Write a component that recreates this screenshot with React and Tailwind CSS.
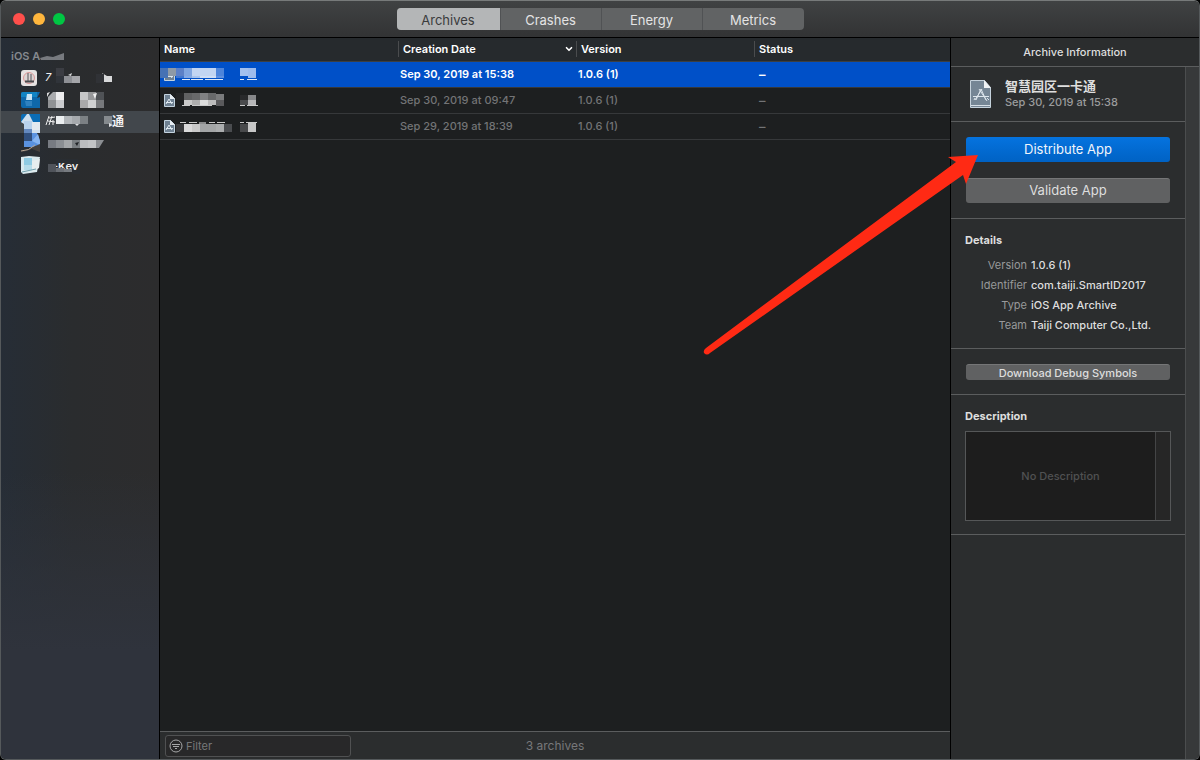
import React, { useState } from 'react';
import { ChevronDown } from 'lucide-react';

const tabs = ['Archives', 'Crashes', 'Energy', 'Metrics'];

// Masked names are drawn as [x, y, width, height, color] blocks
const archives = [
  {
    date: 'Sep 30, 2019 at 15:38',
    version: '1.0.6 (1)',
    blocks: [
      [0, 6, 8, 10, '#4672b4'], [8, 6, 8, 8, '#8e9aa6'], [16, 6, 8, 8, '#5c80c6'],
      [24, 6, 8, 8, '#7fa5e0'], [32, 6, 24, 8, '#c2d5f2'], [56, 6, 8, 8, '#4d84da'],
      [16, 14, 8, 2, '#3f76cf'], [24, 14, 8, 2, '#86aae4'], [32, 14, 8, 2, '#a9c4ec'],
      [40, 14, 16, 2, '#cfdef5'], [56, 14, 8, 2, '#5f90df'],
      [22, 17, 8, 1, '#dfe9f8'], [31, 17, 12, 1, '#dfe9f8'], [45, 17, 18, 1, '#dfe9f8'],
      [80, 6, 8, 8, '#a3c0ee'], [88, 6, 8, 10, '#9dbbec'], [80, 17, 4, 1, '#dfe9f8'], [87, 17, 10, 1, '#dfe9f8'],
    ],
  },
  {
    date: 'Sep 30, 2019 at 09:47',
    version: '1.0.6 (1)',
    blocks: [
      [16, 5, 8, 7, '#242527'], [24, 5, 8, 7, '#606163'], [32, 5, 8, 7, '#68696b'], [40, 5, 8, 7, '#808183'],
      [48, 5, 8, 7, '#68696b'], [56, 6, 8, 6, '#7a7b7d'], [24, 12, 8, 5, '#c9c9c9'], [32, 12, 8, 5, '#aeaeae'],
      [40, 12, 8, 5, '#dcdcdc'], [48, 12, 8, 5, '#bcbcbc'], [56, 12, 8, 6, '#5a5a5c'],
      [22, 17, 8, 1, '#c9c9c9'], [32, 17, 20, 1, '#c9c9c9'],
      [80, 7, 8, 5, '#28292b'], [88, 7, 8, 5, '#87888a'], [80, 12, 8, 5, '#4a4b4d'], [88, 12, 8, 6, '#b6b6b8'],
      [80, 17, 5, 1, '#c9c9c9'], [87, 17, 11, 1, '#c9c9c9'],
    ],
  },
  {
    date: 'Sep 29, 2019 at 18:39',
    version: '1.0.6 (1)',
    blocks: [
      [20, 8, 6, 1, '#c9c9c9'], [29, 8, 8, 1, '#c9c9c9'], [39, 8, 7, 2, '#8a8b8c'], [49, 8, 6, 1, '#c9c9c9'], [57, 8, 8, 1, '#c9c9c9'],
      [16, 10, 8, 8, '#38393b'], [24, 10, 8, 8, '#dadada'], [32, 10, 8, 8, '#c9c9c9'], [40, 10, 16, 8, '#a3a5a6'],
      [56, 10, 8, 8, '#abadae'], [64, 10, 8, 8, '#4a4c4f'],
      [80, 8, 4, 1, '#c9c9c9'], [86, 8, 11, 1, '#c9c9c9'], [80, 10, 8, 8, '#48494b'], [88, 9, 8, 9, '#c6c6c6'],
    ],
  },
];

const details = [
  ['Version', '1.0.6 (1)'],
  ['Identifier', 'com.taiji.SmartID2017'],
  ['Type', 'iOS App Archive'],
  ['Team', 'Taiji Computer Co.,Ltd.'],
];

function Blocks({ blocks }) {
  return blocks.map(([x, y, w, h, color]) => (
    <rect key={`${x}-${y}`} x={x} y={y} width={w} height={h} fill={color} />
  ));
}

const apps = [
  {
    icon: (
      <g>
        <rect y="3" width="16" height="16" rx="3" fill="#e6e2e2" />
        <circle cx="8" cy="11" r="5.5" fill="#dcd4d4" stroke="#dc9a9a" />
        <path d="M7 6v8M10 7v7" stroke="#55555a" fill="none" />
        <path d="M4 14.5h9" stroke="#4b4b4f" strokeWidth="2" />
      </g>
    ),
    label: (
      <g>
        <text x="5" y="14" fontSize="11" fontStyle="italic" fill="#f0f0f0">7</text>
        <path d="M28 8l4-2-1 3zM62 6l5 3-3 1z" fill="#d9dadb" />
        <Blocks blocks={[[16, 1, 8, 8, '#3b3d43'], [16, 9, 8, 7, '#30343a'], [24, 9, 8, 7, '#8e9095'], [32, 9, 8, 7, '#a5a6aa'], [56, 7, 8, 9, '#303236'], [64, 9, 8, 6, '#d8d9da']]} />
      </g>
    ),
  },
  {
    icon: (
      <g>
        <path d="M0 5q0-2 2-2h17l-3 6 3-1v11H2q-2 0-2-2z" fill="#0e68ab" />
        <path d="M0 5q0-2 2-2h14v5H0z" fill="#1284c4" />
        <path d="M6 5h5v6H5z" fill="#c9e4f5" />
        <path d="M4 12h7v5H5z" fill="#2f82c0" />
      </g>
    ),
    label: (
      <g>
        <path d="M8 8l5-5h3v8H8z" fill="#a9abae" />
        <path d="M7 4l3-1-3 5z" fill="#dcdcdd" />
        <Blocks blocks={[[16, 3, 8, 8, '#ededee'], [8, 11, 8, 8, '#909295'], [16, 11, 8, 8, '#cbcccf'], [40, 3, 8, 8, '#c6c6c7'], [48, 3, 8, 8, '#97989a'], [56, 3, 8, 8, '#4f5256'], [40, 11, 8, 8, '#a9a9aa'], [48, 11, 8, 8, '#d0d1d2'], [56, 11, 8, 8, '#77797c']]} />
        <path d="M53 5l4-1-2 6z" fill="#f1f1f1" />
      </g>
    ),
  },
  {
    icon: (
      <g>
        <path d="M0 5q0-2 2-2h17v9H2l-2-1z" fill="#0b6db6" />
        <path d="M0 11l6-8h2l4 8 7 2v9H8l-5-3v-6z" fill="#cfdfee" />
        <path d="M3 10h8v8H3z" fill="#b9d2ec" />
        <path d="M11 11h8v8h-8z" fill="#e3e9ef" />
        <path d="M3 18h8v4H3z" fill="#6489c0" />
      </g>
    ),
    label: (
      <g>
        <path d="M6 14l3-9M9 7l6-1M8 10l7 1M12 5l-3 9M13 9v5" stroke="#f0f0f0" fill="none" />
        <Blocks blocks={[[16, 5, 8, 8, '#eceff1'], [24, 5, 8, 8, '#b3b7bb'], [32, 5, 8, 8, '#a5a9ad'], [40, 5, 8, 8, '#7c8185'], [64, 5, 8, 8, '#858a8e']]} />
        <path d="M35 13l4 0-2 2zM69 12l4 2-4 2z" fill="#dfe1e3" />
        <text x="72" y="15" fontSize="12" fontWeight="600" fill="#f2f2f2">通</text>
      </g>
    ),
    selected: true,
  },
  {
    icon: (
      <g>
        <path d="M3 0h8v8H3z" fill="#31507f" />
        <path d="M11 0h5l3 8v6H3V8h8z" fill="#5a92e0" />
        <path d="M11 8l6-7 2 7v4z" fill="#86b4f1" />
        <path d="M0 19l19-8v8l-8-3-9 3z" fill="#44403e" />
        <path d="M0 18q8 0 14-6" stroke="#b7a594" fill="none" />
      </g>
    ),
    label: (
      <g>
        <Blocks blocks={[[8, 7, 8, 8, '#777b82'], [16, 7, 8, 8, '#8a8e93'], [24, 7, 8, 8, '#a3a6a9'], [32, 7, 8, 8, '#7a7f83'], [40, 7, 8, 8, '#bbbdbf'], [48, 7, 8, 8, '#c2c4c6']]} />
        <path d="M56 7h8l-5 8h-3z" fill="#8b8e92" />
        <path d="M35 10l4-1-2 4z" fill="#202327" />
      </g>
    ),
  },
  {
    icon: (
      <g>
        <path d="M0 2l8-1 11 1-3 15-14 2-2-2z" fill="#d9e9ee" />
        <path d="M3 3h8v7H3z" fill="#8fcbe3" />
        <path d="M3 10h8v5H3z" fill="#b5dcea" />
        <path d="M11 6l8-2-1 9-7 4z" fill="#e6edee" />
        <path d="M1 17l14-3" stroke="#6e9eab" />
      </g>
    ),
    label: (
      <g>
        <text x="13" y="15" fontSize="11" fontWeight="600" fill="#f0f0f0">-Key</text>
        <Blocks blocks={[[8, 9, 8, 8, '#50545b'], [24, 14, 8, 3, '#777b80'], [16, 4, 22, 4, '#292d32'], [16, 13, 8, 4, '#6a6e74'], [32, 15, 8, 4, '#292d32']]} />
      </g>
    ),
  },
];

function FileIcon() {
  return (
    <g>
      <path d="M4.5 6.5h6l4 4v8h-10z" fill="#6f8192" stroke="#c3d3df" />
      <path d="M10 6v5h5z" fill="#e8eef3" />
      <path d="M6 16l3-5 3 5M6 14.5h7" stroke="#dfe9f0" fill="none" />
    </g>
  );
}

function TitleBar({ active, onSelect }) {
  return (
    <header className="grid h-[37px] shrink-0 grid-cols-[1fr_auto_1fr] items-center border-b border-black bg-linear-to-b from-[#404243] to-[#323334]">
      <div className="flex gap-2 pl-3">
        <button aria-label="Close" className="size-3 rounded-full bg-[#ff4f4b]" />
        <button aria-label="Minimize" className="size-3 rounded-full bg-[#ffb63d]" />
        <button aria-label="Zoom" className="size-3 rounded-full bg-[#00c643]" />
      </div>
      <nav className="flex h-[22px] divide-x divide-[#505254] overflow-hidden rounded bg-[#616364] text-[13px] leading-6">
        {tabs.map((tab) => (
          <button
            key={tab}
            onClick={() => onSelect(tab)}
            className={tab === active ? 'w-[104px] bg-[#b4b6b7] text-[#3a3b3c]' : 'w-[101px] text-[#e4e4e4]'}
          >
            {tab}
          </button>
        ))}
      </nav>
    </header>
  );
}

function Sidebar() {
  return (
    <aside className="w-[159px] shrink-0 border-r border-black bg-[linear-gradient(to_bottom,transparent_60%,#2f333c_85%),linear-gradient(to_right,#262d36,#2a2c2e_45%,#2c2c2d)] pt-2">
      <div className="flex h-[21px] items-center pl-[10px] font-semibold text-[#85898f]">
        <h2>iOS A</h2>
        <svg width="26" height="12" aria-hidden="true">
          <path d="M0 7l7-2 6 1 11-4v7H1z" fill="#777a7f" />
        </svg>
      </div>
      <ul>
        {apps.map((app, i) => (
          <li key={i}>
            <button className={`flex h-[22px] w-full items-center pl-5 ${app.selected ? 'bg-[#42474c]' : ''}`}>
              <svg width="19" height="22">{app.icon}</svg>
              <svg width="90" height="22">{app.label}</svg>
            </button>
          </li>
        ))}
      </ul>
    </aside>
  );
}

function ArchiveTable() {
  const [selected, setSelected] = useState(0);

  return (
    <table className="w-full table-fixed border-collapse text-left">
      <thead>
        <tr className="h-[23px] border-b border-[#3d3f41] bg-[#262a2d] text-white">
          <th className="w-[238px] pl-1 font-semibold">Name</th>
          <th className="w-[178px] font-semibold">
            <div className="flex h-4 items-center justify-between border-l border-[#4a4c4e] pr-[2px] pl-1">
              Creation Date
              <ChevronDown size={10} strokeWidth={4} />
            </div>
          </th>
          <th className="w-[178px] font-semibold">
            <div className="flex h-4 items-center border-l border-[#4a4c4e] pl-1">Version</div>
          </th>
          <th className="font-semibold">
            <div className="flex h-4 items-center border-l border-[#4a4c4e] pl-1">Status</div>
          </th>
        </tr>
      </thead>
      <tbody>
        {archives.map((archive, i) => (
          <tr
            key={archive.date}
            onClick={() => setSelected(i)}
            className={`h-[26px] border-b border-[#36383a] ${i === selected ? 'bg-[#0050c8] font-semibold text-white' : 'font-medium text-[#737476]'}`}
          >
            <td className="p-0">
              <svg width="100" height="25" className="block">
                <FileIcon />
                <Blocks blocks={archive.blocks} />
              </svg>
            </td>
            <td className="py-0 pl-[2px]">{archive.date}</td>
            <td className="py-0 pl-[2px]">{archive.version}</td>
            <td className="py-0 pl-[5px] text-[13px] leading-4">–</td>
          </tr>
        ))}
      </tbody>
    </table>
  );
}

function Arrow() {
  return (
    <svg width="280" height="206" className="pointer-events-none absolute top-4 right-[192px] z-10" aria-hidden="true">
      <path d="M280 2L250 4l8 5L8 195q-3 2-2 5 3 3 6 0L265 22l3 9z" fill="#ff2a14" />
    </svg>
  );
}

function Inspector() {
  return (
    <aside className="flex w-[249px] shrink-0 flex-col border-l border-black bg-[#2b2d2e] text-[#dedede]">
      <h2 className="flex h-[29px] shrink-0 items-center justify-center border-b border-[#5b5d5e] font-medium">Archive Information</h2>
      <div className="flex flex-1">
        <div className="flex-1 divide-y divide-[#5b5d5e]">
          <section className="flex h-[55px] items-center gap-3 pl-[18px]">
            <svg width="24" height="30">
              <path d="M1.5 1.5h14l6 7v20h-20z" fill="#758695" stroke="#c5d2dc" />
              <path d="M15 1l7 8h-7z" fill="#f0f3f5" />
              <path d="M2 26.5h19" stroke="#d6dfe6" />
              <path d="M7 21l5-11 5 11M4 17.5h16M10 10l8 12M13 10L6 21M5 21l1-2M18 19l2 2" stroke="#dce5ec" fill="none" />
            </svg>
            <div className="leading-4">
              <h3 className="text-[13px] font-semibold">智慧园区一卡通</h3>
              <p className="font-medium text-[#9b9c9d]">Sep 30, 2019 at 15:38</p>
            </div>
          </section>
          <section className="space-y-4 px-[15px] pt-[15px] pb-[15px] text-[13px]">
            <div className="relative">
              <button className="block h-[25px] w-full rounded-[3px] bg-linear-to-b from-[#0573df] to-[#0062c4] text-[#f0f5fb]">Distribute App</button>
              <Arrow />
            </div>
            <button className="block h-[25px] w-full rounded-[3px] border-t border-[#757677] bg-[#606162]">Validate App</button>
          </section>
          <section className="h-[130px] px-[14px] pt-[13px]">
            <h3 className="leading-4 font-bold">Details</h3>
            <dl className="grid grid-cols-[62px_1fr] gap-x-1 pt-[7px] leading-5">
              {details.map(([label, value]) => (
                <React.Fragment key={label}>
                  <dt className="text-right text-[#98999a]">{label}</dt>
                  <dd className="font-medium whitespace-nowrap">{value}</dd>
                </React.Fragment>
              ))}
            </dl>
          </section>
          <section className="px-[15px] pt-[15px] pb-[14px]">
            <button className="block h-4 w-full rounded-[3px] border-t border-[#757677] bg-[#606162] leading-[14px] font-medium">Download Debug Symbols</button>
          </section>
          <section className="px-[14px] pt-[13px] pb-[13px]">
            <h3 className="leading-4 font-bold">
              <label htmlFor="description">Description</label>
            </h3>
            <div className="mt-[7px] flex h-[90px] border border-[#555758] bg-[#1d1d1d]">
              <textarea
                id="description"
                placeholder="No Description"
                className="min-w-0 flex-1 resize-none pt-9 text-center leading-4 font-medium outline-none placeholder:text-[#505152]"
              />
              <div className="w-[15px] border-l border-[#444546] bg-[#262626]" />
            </div>
          </section>
          <div />
        </div>
        <div className="w-[14px] border-l border-[#4b4d4e] bg-[#37393a]" />
      </div>
    </aside>
  );
}

function App() {
  const [active, setActive] = useState('Archives');

  return (
    <div className="min-h-screen bg-black">
      <div className="flex min-h-screen flex-col overflow-hidden rounded-md border border-[#55595b] border-t-[#777a7a] bg-[#1e1f20] font-[Inter,'Noto_Sans_CJK_SC',sans-serif] text-[11px]">
        <TitleBar active={active} onSelect={setActive} />
        <div className="flex flex-1">
          <Sidebar />
          <main className="flex min-w-0 flex-1 flex-col bg-[#1d1f20]">
            <div className="flex-1">
              <ArchiveTable />
            </div>
            <footer className="grid h-[28px] grid-cols-[1fr_auto_1fr] items-center border-t border-[#5b5d5e] bg-[#2b2d2e] px-[5px]">
              <label className="flex h-[22px] w-[186px] items-center gap-[3px] rounded-[3px] border border-[#505152] bg-[#282829] pl-[3px]">
                <svg width="14" height="14" fill="none" stroke="#a6a7a8">
                  <circle cx="7" cy="7" r="6" />
                  <path d="M3 5.5h8M4 7.5h6M6 9.5h2" />
                </svg>
                <input placeholder="Filter" aria-label="Filter" className="min-w-0 flex-1 leading-4 outline-none placeholder:text-[#77787a]" />
              </label>
              <span className="text-xs leading-4 text-[#77787a]">3 archives</span>
            </footer>
          </main>
          <Inspector />
        </div>
      </div>
    </div>
  );
}

export default App;
